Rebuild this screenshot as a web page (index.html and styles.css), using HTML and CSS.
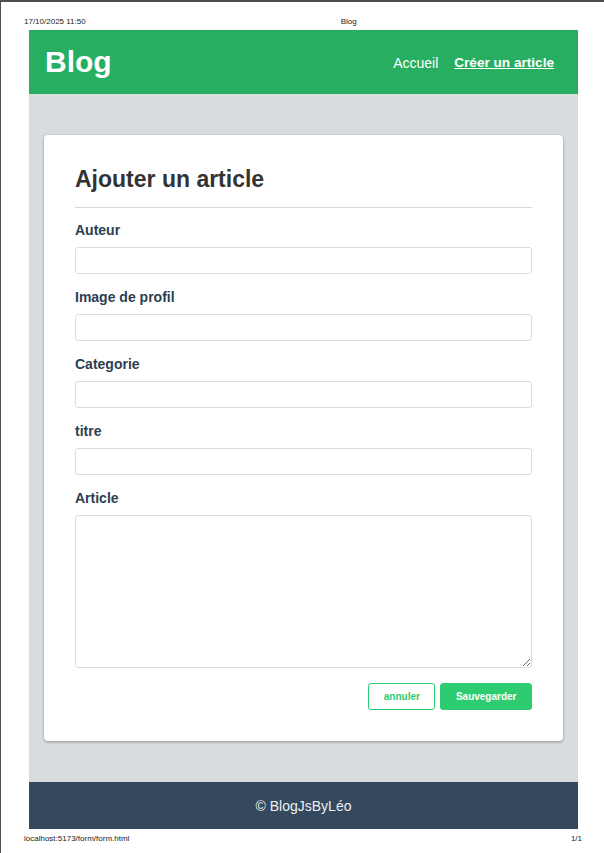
FILE: index.html
```html
<!DOCTYPE html>
<html lang="fr">
<head>
<meta charset="utf-8">
<title>Blog</title>
<link rel="stylesheet" href="styles.css">
</head>
<body>
<div class="sheet">
  <div class="print-head">
    <span class="print-date">17/10/2025 11:50</span>
    <span class="print-title">Blog</span>
  </div>
  <div class="page">
    <header class="topbar">
      <div class="logo">Blog</div>
      <nav class="nav">
        <a class="nav-link" href="#">Accueil</a>
        <a class="nav-link active" href="#">Créer un article</a>
      </nav>
    </header>
    <main class="content">
      <section class="card">
        <h1 class="card-title">Ajouter un article</h1>
        <hr class="divider">
        <form class="form">
          <div class="field">
            <label class="label">Auteur</label>
            <input class="input" type="text">
          </div>
          <div class="field">
            <label class="label">Image de profil</label>
            <input class="input" type="text">
          </div>
          <div class="field">
            <label class="label">Categorie</label>
            <input class="input" type="text">
          </div>
          <div class="field">
            <label class="label">titre</label>
            <input class="input" type="text">
          </div>
          <div class="field">
            <label class="label">Article</label>
            <textarea class="textarea"></textarea>
          </div>
          <div class="actions">
            <button type="button" class="btn btn-outline">annuler</button>
            <button type="button" class="btn btn-primary">Sauvegarder</button>
          </div>
        </form>
      </section>
    </main>
    <footer class="footer">© BlogJsByLéo</footer>
  </div>
  <div class="print-foot">
    <span>localhost:5173/form/form.html</span>
    <span>1/1</span>
  </div>
</div>
</body>
</html>
```
FILE: styles.css
```css
* { box-sizing: border-box; }
html, body { margin: 0; padding: 0; background: #fff; }
body { font-family: "Liberation Sans", Arial, sans-serif; }

.sheet {
  width: 604px;
  height: 853px;
  border-top: 2px solid #4d4f52;
  border-left: 1px solid #4d4f52;
  display: flex;
  flex-direction: column;
}

.print-head {
  height: 28px;
  display: flex;
  align-items: flex-end;
  padding: 0 0 4px 23px;
  font-size: 8px;
  line-height: 9px;
  color: #222;
}
.print-title { margin-left: 255px; }

.page {
  margin: 0 26px 0 28px;
  display: flex;
  flex-direction: column;
}

.topbar {
  height: 64px;
  background: #27ae60;
  display: flex;
  align-items: center;
  justify-content: space-between;
  padding: 0 24px 0 16px;
  color: #fff;
}
.logo {
  font-size: 30px;
  font-weight: bold;
  line-height: 34px;
}
.nav { display: flex; gap: 16px; align-items: center; margin-top: 1px; }
.nav-link {
  color: #fff;
  text-decoration: none;
  font-size: 14px;
}
.nav-link.active { font-weight: bold; text-decoration: underline; font-size: 13.6px; }

.content {
  background: #d9dcdf;
  padding: 41px 15px;
}

.card {
  background: #fff;
  border-radius: 4px;
  box-shadow: 0 1px 3px rgba(0,0,0,0.35);
  padding: 30px 31px 31px 31px;
}

.card-title {
  margin: 0;
  font-size: 23px;
  line-height: 28px;
  font-weight: bold;
  color: #333;
}
.divider {
  margin: 14px 0 0 0;
  border: 0;
  border-top: 1px solid #d8d8d8;
  height: 0;
}

.form { display: flex; flex-direction: column; padding-top: 14px; }
.field { display: flex; flex-direction: column; margin-bottom: 15px; }
.label {
  font-size: 14px;
  line-height: 17px;
  font-weight: bold;
  color: #2c3e50;
  margin-bottom: 8px;
}
.input, .textarea {
  display: block;
  width: 100%;
  border: 1px solid #dddddd;
  border-radius: 3px;
  background: #fff;
  font-family: inherit;
  font-size: 13px;
  margin: 0;
}
.input { height: 27px; }
.textarea { height: 153px; resize: vertical; }
.field:last-of-type { margin-bottom: 16px; }

.actions {
  display: flex;
  justify-content: flex-end;
  gap: 5px;
}
.btn {
  height: 27px;
  padding: 0 14.5px;
  font-family: inherit;
  font-size: 10px;
  font-weight: bold;
  border-radius: 3px;
  border: 1px solid #2ecc71;
  cursor: pointer;
}
.btn-outline { background: #fff; color: #2ecc71; }
.btn-primary { background: #2ecc71; color: #fff; }

.footer {
  height: 47px;
  background: #34495e;
  color: #ecf0f1;
  font-size: 14px;
  display: flex;
  align-items: center;
  justify-content: center;
}

.print-foot {
  display: flex;
  justify-content: space-between;
  padding: 5px 22px 0 23px;
  font-size: 8px;
  line-height: 9px;
  color: #222;
}
```
